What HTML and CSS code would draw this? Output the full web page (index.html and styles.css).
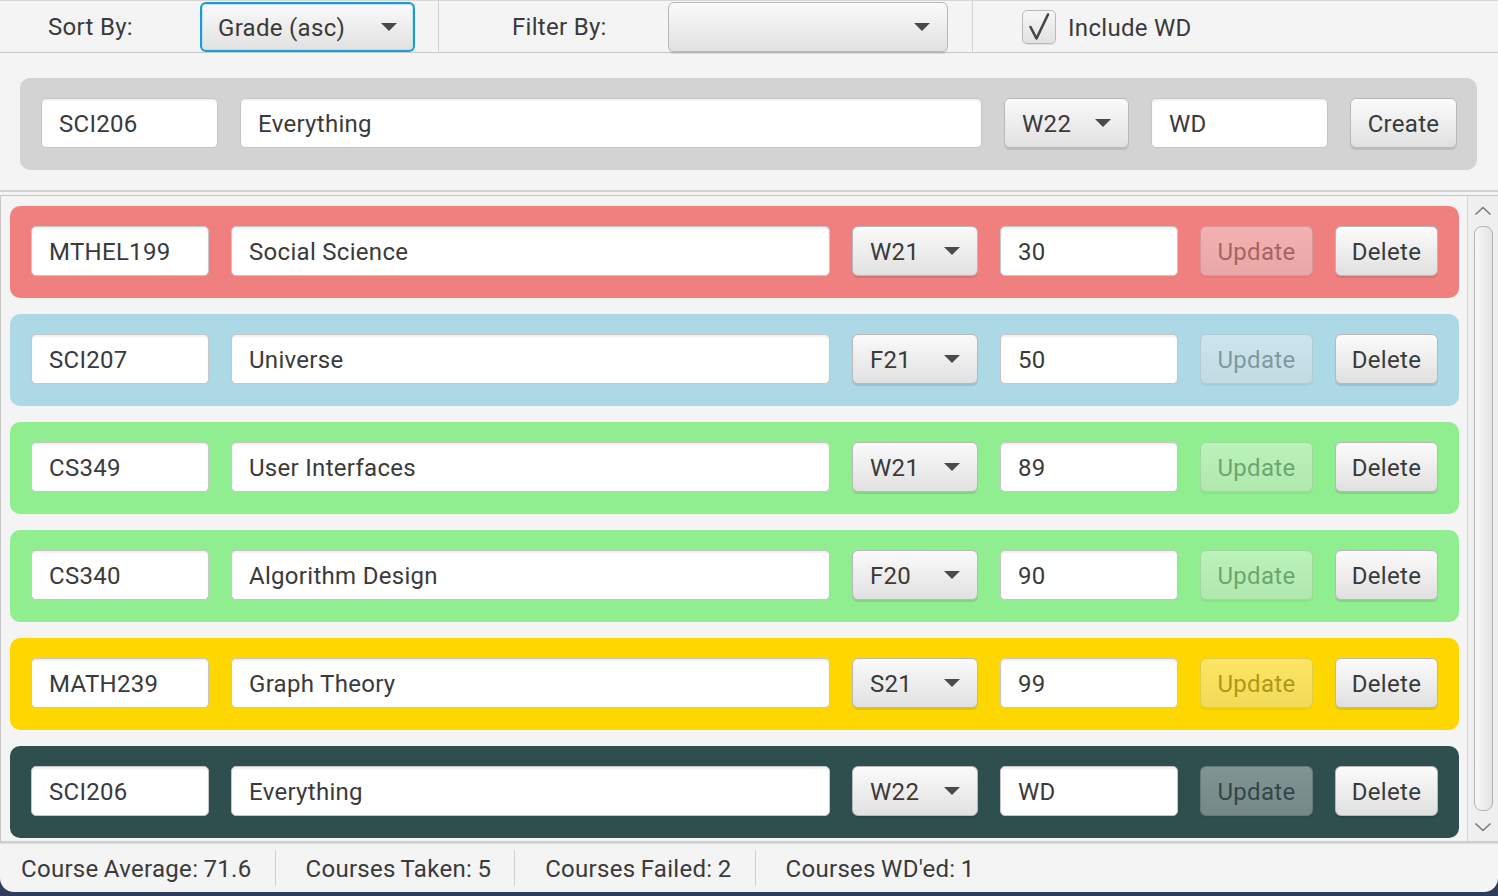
FILE: index.html
```html
<!DOCTYPE html>
<html>
<head>
<meta charset="utf-8">
<title>Courses</title>
<link rel="stylesheet" href="styles.css">
</head>
<body>
<div class="app">
  <div class="toolbar">
    <div class="tb-label sort-label">Sort By:</div>
    <div class="combo focused sort-combo"><span class="combo-text">Grade (asc)</span><i class="arrow"></i></div>
    <div class="tb-sep"></div>
    <div class="tb-label filter-label">Filter By:</div>
    <div class="combo filter-combo"><span class="combo-text"></span><i class="arrow"></i></div>
    <div class="tb-sep"></div>
    <div class="check">
      <span class="check-box"><svg width="34" height="34" viewBox="0 0 34 34"><polyline points="8.5,17 14.5,28.5 26,4.5" fill="none" stroke="#454545" stroke-width="2.6" stroke-linejoin="round" stroke-linecap="round"/></svg></span>
      <span class="check-text">Include WD</span>
    </div>
  </div>

  <div class="create-pane">
    <div class="create-box">
      <div class="field code">SCI206</div>
      <div class="field name">Everything</div>
      <div class="combo term term-top"><span class="combo-text">W22</span><i class="arrow"></i></div>
      <div class="field grade">WD</div>
      <div class="btn create">Create</div>
    </div>
  </div>

  <div class="divider"></div>

  <div class="scroll">
    <div class="list">
      <div class="row red">
        <div class="field code">MTHEL199</div>
        <div class="field name">Social Science</div>
        <div class="combo term"><span class="combo-text">W21</span><i class="arrow"></i></div>
        <div class="field grade">30</div>
        <div class="btn update disabled">Update</div>
        <div class="btn delete">Delete</div>
      </div>
      <div class="row blue">
        <div class="field code">SCI207</div>
        <div class="field name">Universe</div>
        <div class="combo term"><span class="combo-text">F21</span><i class="arrow"></i></div>
        <div class="field grade">50</div>
        <div class="btn update disabled">Update</div>
        <div class="btn delete">Delete</div>
      </div>
      <div class="row green">
        <div class="field code">CS349</div>
        <div class="field name">User Interfaces</div>
        <div class="combo term"><span class="combo-text">W21</span><i class="arrow"></i></div>
        <div class="field grade">89</div>
        <div class="btn update disabled">Update</div>
        <div class="btn delete">Delete</div>
      </div>
      <div class="row green">
        <div class="field code">CS340</div>
        <div class="field name">Algorithm Design</div>
        <div class="combo term"><span class="combo-text">F20</span><i class="arrow"></i></div>
        <div class="field grade">90</div>
        <div class="btn update disabled">Update</div>
        <div class="btn delete">Delete</div>
      </div>
      <div class="row gold">
        <div class="field code">MATH239</div>
        <div class="field name">Graph Theory</div>
        <div class="combo term"><span class="combo-text">S21</span><i class="arrow"></i></div>
        <div class="field grade">99</div>
        <div class="btn update disabled">Update</div>
        <div class="btn delete">Delete</div>
      </div>
      <div class="row slate">
        <div class="field code">SCI206</div>
        <div class="field name">Everything</div>
        <div class="combo term"><span class="combo-text">W22</span><i class="arrow"></i></div>
        <div class="field grade">WD</div>
        <div class="btn update disabled">Update</div>
        <div class="btn delete">Delete</div>
      </div>
    </div>
    <div class="vbar">
      <div class="vbar-btn"><svg width="18" height="10" viewBox="0 0 18 10"><polyline points="1.5,8.5 9,1.5 16.5,8.5" fill="none" stroke="#7a7a7a" stroke-width="1.6"/></svg></div>
      <div class="vbar-thumb"></div>
      <div class="vbar-btn"><svg width="18" height="10" viewBox="0 0 18 10"><polyline points="1.5,1.5 9,8.5 16.5,1.5" fill="none" stroke="#7a7a7a" stroke-width="1.6"/></svg></div>
    </div>
  </div>

  <div class="status">
    <div class="stat first">Course Average: 71.6</div>
    <div class="stat-sep"></div>
    <div class="stat">Courses Taken: 5</div>
    <div class="stat-sep"></div>
    <div class="stat">Courses Failed: 2</div>
    <div class="stat-sep"></div>
    <div class="stat">Courses WD'ed: 1</div>
  </div>
</div>
</body>
</html>
```

FILE: styles.css
```css
* { box-sizing: border-box; }

html, body {
  margin: 0;
  padding: 0;
  width: 1498px;
  height: 896px;
  overflow: hidden;
  background: #2f3c5a;
}

body {
  font-family: Roboto, "Liberation Sans", sans-serif;
  font-size: 24px;
  letter-spacing: 0.3px;
  color: #3a3a3a;
}

.app {
  width: 1498px;
  height: 892px;
  background: #f4f4f4;
  border-radius: 0 0 14px 14px;
  overflow: hidden;
  display: flex;
  flex-direction: column;
}

/* ---------- toolbar ---------- */
.toolbar {
  height: 53px;
  flex: none;
  display: flex;
  align-items: center;
  border-top: 1px solid #d6d6d6;
  border-bottom: 1px solid #c9c9c9;
  background: #f4f4f4;
}

.tb-label {
  height: 51px;
  line-height: 53px;
  flex: none;
}
.sort-label { width: 200px; padding-left: 48px; }
.filter-label { width: 229px; padding-left: 73px; }

.tb-sep {
  width: 1px;
  height: 52px;
  background: #d2d2d2;
  flex: none;
}
.sort-combo { width: 215px; height: 50px; margin-right: 23px; }
.filter-combo { width: 280px; height: 48px; margin-right: 24px; }

.check {
  display: flex;
  align-items: center;
  margin-left: 49px;
  height: 51px;
}
.check-box {
  width: 34px;
  height: 34px;
  border: 1px solid #b9b9b9;
  border-radius: 5px;
  background: linear-gradient(#f6f6f6, #e2e2e2);
  box-shadow: 0 1px 0 rgba(0,0,0,0.08);
  display: flex;
  margin-right: 12px;
}
.check-box svg { display: block; margin: -1px; }
.check-text { padding-top: 2px; }

/* ---------- controls ---------- */
.field {
  height: 50px;
  line-height: 50px;
  background: #ffffff;
  border: 1px solid #c6c6c6;
  border-radius: 5px;
  padding-left: 17px;
  box-shadow: inset 0 2px 2px rgba(0,0,0,0.06);
  flex: none;
  white-space: nowrap;
  overflow: hidden;
}

.combo {
  height: 50px;
  display: flex;
  align-items: center;
  justify-content: space-between;
  padding: 0 17px 0 17px;
  border: 1px solid #b8b8b8;
  border-radius: 6px;
  background: linear-gradient(#fafafa, #e1e1e1);
  box-shadow: 0 2px 0 rgba(0,0,0,0.10);
  flex: none;
}
.combo.focused {
  border: 2px solid #1d9ad6;
  box-shadow: inset 0 0 0 1px #bfe3f5;
  padding-left: 16px;
  padding-right: 16px;
}
.combo-text { white-space: nowrap; padding-top: 2px; }
.arrow {
  width: 0;
  height: 0;
  border-left: 8px solid transparent;
  border-right: 8px solid transparent;
  border-top: 8px solid #4a4a4a;
  flex: none;
}

.btn {
  height: 50px;
  line-height: 50px;
  text-align: center;
  border: 1px solid #b8b8b8;
  border-radius: 6px;
  background: linear-gradient(#fbfbfb, #e0e0e0);
  box-shadow: 0 2px 0 rgba(0,0,0,0.10);
  flex: none;
  white-space: nowrap;
}
.btn.disabled { opacity: 0.4; }

/* ---------- create pane ---------- */
.create-pane {
  height: 137px;
  flex: none;
  padding: 25px 21px 20px 20px;
}
.create-box {
  height: 92px;
  background: #d3d3d3;
  border-radius: 10px;
  padding: 20px 20px 0 21px;
  display: flex;
  gap: 22px;
}
.create-box .code { width: 177px; }
.create-box .name { flex: 1; }
.create-box .term-top { width: 125px; }
.create-box .grade { width: 177px; }
.create-box .create { width: 107px; }

.divider {
  height: 5px;
  flex: none;
  border-top: 2px solid #d2d2d2;
}

/* ---------- scroll list ---------- */
.scroll {
  height: 648px;
  flex: none;
  display: flex;
  border-top: 1px solid #c8c8c8;
  border-left: 1px solid #c8c8c8;
  border-bottom: 2px solid #cfcfcf;
  overflow: hidden;
}
.list {
  flex: 1;
  padding: 10px 8px 0 9px;
  display: flex;
  flex-direction: column;
  gap: 16px;
  overflow: hidden;
}
.row {
  height: 92px;
  flex: none;
  border-radius: 10px;
  padding: 20px 21px 0 21px;
  display: flex;
  gap: 22px;
}
.row .code { width: 178px; }
.row .name { flex: 1; }
.row .term { width: 126px; }
.row .grade { width: 178px; }
.row .update { width: 113px; }
.row .delete { width: 103px; }

.red { background: #f08080; }
.blue { background: #add8e6; }
.green { background: #90ee90; }
.gold { background: #ffd700; }
.slate { background: #2f4f4f; }

.vbar {
  width: 31px;
  flex: none;
  background: #efefef;
  border-left: 1px solid #d6d6d6;
  display: flex;
  flex-direction: column;
  align-items: center;
}
.vbar-btn {
  height: 29px;
  flex: none;
  display: flex;
  align-items: center;
  justify-content: center;
}
.vbar-thumb {
  width: 19px;
  flex: 1;
  margin: 1px 0 1px 0;
  border: 1px solid #b3b3b3;
  border-radius: 8px;
  background: linear-gradient(90deg, #f7f7f7, #e4e4e4);
}

/* ---------- status ---------- */
.status {
  flex: 1;
  display: flex;
  align-items: center;
  border-top: 1px solid #dddddd;
}
.stat {
  padding: 2px 23px 0 30px;
  white-space: nowrap;
  word-spacing: -1px;
}
.stat.first { padding-left: 21px; }
.stat-sep {
  width: 1px;
  height: 36px;
  background: #d0d0d0;
}
```
